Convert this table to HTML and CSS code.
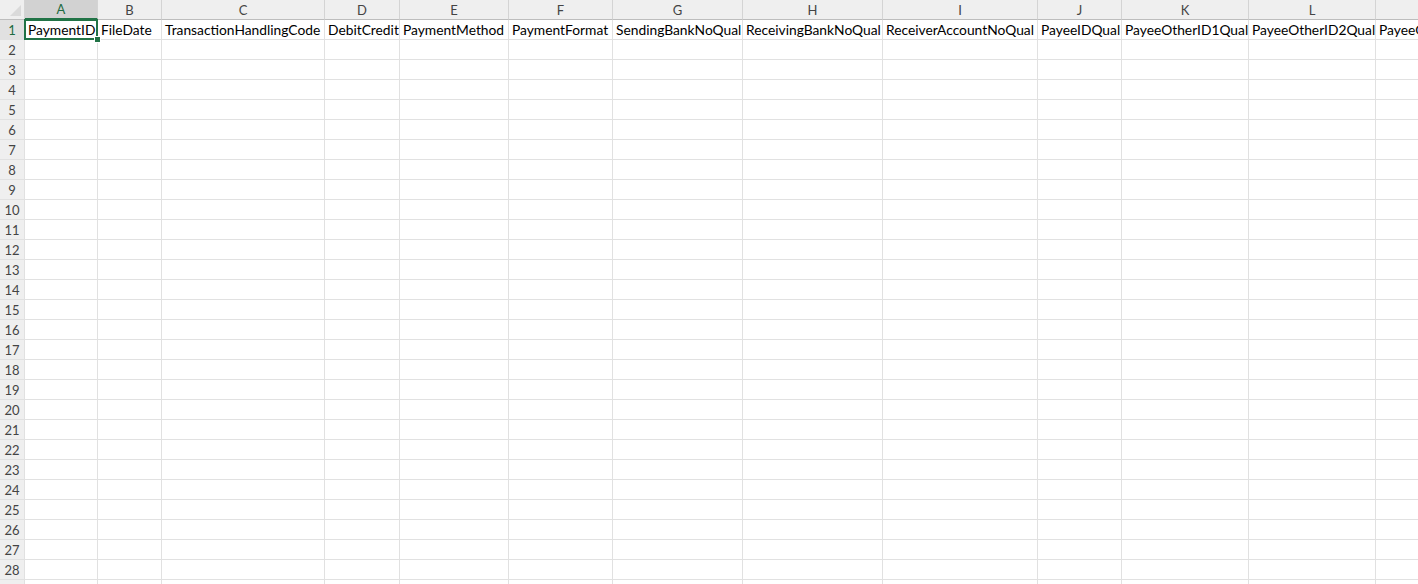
FILE: index.html
```html
<!DOCTYPE html>
<html>
<head>
<meta charset="utf-8">
<link rel="stylesheet" href="styles.css">
</head>
<body>
<div class="sheet">
<table class="grid">
<colgroup>
<col class="c-rh"><col class="c-a"><col class="c-b"><col class="c-c"><col class="c-d"><col class="c-e"><col class="c-f"><col class="c-g"><col class="c-h"><col class="c-i"><col class="c-j"><col class="c-k"><col class="c-l"><col class="c-m">
</colgroup>
<thead>
<tr class="colhead">
<th class="corner"><span class="tri"></span></th>
<th class="sel">A</th><th>B</th><th>C</th><th>D</th><th>E</th><th>F</th><th>G</th><th>H</th><th>I</th><th>J</th><th>K</th><th>L</th><th>M</th>
</tr>
</thead>
<tbody>
<tr><th class="rsel">1</th><td class="active"><span class="txt">PaymentID</span><span class="box"></span><span class="handle"></span></td><td>FileDate</td><td>TransactionHandlingCode</td><td>DebitCredit</td><td>PaymentMethod</td><td>PaymentFormat</td><td>SendingBankNoQual</td><td>ReceivingBankNoQual</td><td>ReceiverAccountNoQual</td><td>PayeeIDQual</td><td>PayeeOtherID1Qual</td><td>PayeeOtherID2Qual</td><td>PayeeOtherID3Qual</td></tr>
<tr><th>2</th><td></td><td></td><td></td><td></td><td></td><td></td><td></td><td></td><td></td><td></td><td></td><td></td><td></td></tr>
<tr><th>3</th><td></td><td></td><td></td><td></td><td></td><td></td><td></td><td></td><td></td><td></td><td></td><td></td><td></td></tr>
<tr><th>4</th><td></td><td></td><td></td><td></td><td></td><td></td><td></td><td></td><td></td><td></td><td></td><td></td><td></td></tr>
<tr><th>5</th><td></td><td></td><td></td><td></td><td></td><td></td><td></td><td></td><td></td><td></td><td></td><td></td><td></td></tr>
<tr><th>6</th><td></td><td></td><td></td><td></td><td></td><td></td><td></td><td></td><td></td><td></td><td></td><td></td><td></td></tr>
<tr><th>7</th><td></td><td></td><td></td><td></td><td></td><td></td><td></td><td></td><td></td><td></td><td></td><td></td><td></td></tr>
<tr><th>8</th><td></td><td></td><td></td><td></td><td></td><td></td><td></td><td></td><td></td><td></td><td></td><td></td><td></td></tr>
<tr><th>9</th><td></td><td></td><td></td><td></td><td></td><td></td><td></td><td></td><td></td><td></td><td></td><td></td><td></td></tr>
<tr><th>10</th><td></td><td></td><td></td><td></td><td></td><td></td><td></td><td></td><td></td><td></td><td></td><td></td><td></td></tr>
<tr><th>11</th><td></td><td></td><td></td><td></td><td></td><td></td><td></td><td></td><td></td><td></td><td></td><td></td><td></td></tr>
<tr><th>12</th><td></td><td></td><td></td><td></td><td></td><td></td><td></td><td></td><td></td><td></td><td></td><td></td><td></td></tr>
<tr><th>13</th><td></td><td></td><td></td><td></td><td></td><td></td><td></td><td></td><td></td><td></td><td></td><td></td><td></td></tr>
<tr><th>14</th><td></td><td></td><td></td><td></td><td></td><td></td><td></td><td></td><td></td><td></td><td></td><td></td><td></td></tr>
<tr><th>15</th><td></td><td></td><td></td><td></td><td></td><td></td><td></td><td></td><td></td><td></td><td></td><td></td><td></td></tr>
<tr><th>16</th><td></td><td></td><td></td><td></td><td></td><td></td><td></td><td></td><td></td><td></td><td></td><td></td><td></td></tr>
<tr><th>17</th><td></td><td></td><td></td><td></td><td></td><td></td><td></td><td></td><td></td><td></td><td></td><td></td><td></td></tr>
<tr><th>18</th><td></td><td></td><td></td><td></td><td></td><td></td><td></td><td></td><td></td><td></td><td></td><td></td><td></td></tr>
<tr><th>19</th><td></td><td></td><td></td><td></td><td></td><td></td><td></td><td></td><td></td><td></td><td></td><td></td><td></td></tr>
<tr><th>20</th><td></td><td></td><td></td><td></td><td></td><td></td><td></td><td></td><td></td><td></td><td></td><td></td><td></td></tr>
<tr><th>21</th><td></td><td></td><td></td><td></td><td></td><td></td><td></td><td></td><td></td><td></td><td></td><td></td><td></td></tr>
<tr><th>22</th><td></td><td></td><td></td><td></td><td></td><td></td><td></td><td></td><td></td><td></td><td></td><td></td><td></td></tr>
<tr><th>23</th><td></td><td></td><td></td><td></td><td></td><td></td><td></td><td></td><td></td><td></td><td></td><td></td><td></td></tr>
<tr><th>24</th><td></td><td></td><td></td><td></td><td></td><td></td><td></td><td></td><td></td><td></td><td></td><td></td><td></td></tr>
<tr><th>25</th><td></td><td></td><td></td><td></td><td></td><td></td><td></td><td></td><td></td><td></td><td></td><td></td><td></td></tr>
<tr><th>26</th><td></td><td></td><td></td><td></td><td></td><td></td><td></td><td></td><td></td><td></td><td></td><td></td><td></td></tr>
<tr><th>27</th><td></td><td></td><td></td><td></td><td></td><td></td><td></td><td></td><td></td><td></td><td></td><td></td><td></td></tr>
<tr><th>28</th><td></td><td></td><td></td><td></td><td></td><td></td><td></td><td></td><td></td><td></td><td></td><td></td><td></td></tr>
<tr><th></th><td></td><td></td><td></td><td></td><td></td><td></td><td></td><td></td><td></td><td></td><td></td><td></td><td></td></tr>
</tbody>
</table>
</div>
</body>
</html>
```
FILE: styles.css
```css
html, body {
  margin: 0;
  padding: 0;
  background: #ffffff;
}
.sheet {
  width: 1418px;
  height: 584px;
  overflow: hidden;
}
.grid {
  border-collapse: separate;
  border-spacing: 0;
  table-layout: fixed;
  width: 1503px;
  font-family: Lato, "Open Sans", sans-serif;
  font-size: 13.8px;
  color: #000;
}
.c-rh { width: 25px; }
.c-a { width: 73px; }
.c-b { width: 64px; }
.c-c { width: 163px; }
.c-d { width: 75px; }
.c-e { width: 109px; }
.c-f { width: 104px; }
.c-g { width: 130px; }
.c-h { width: 140px; }
.c-i { width: 155px; }
.c-j { width: 84px; }
.c-k { width: 127px; }
.c-l { width: 127px; }
.c-m { width: 127px; }

.grid th, .grid td {
  box-sizing: border-box;
  padding: 0;
  border-right: 1px solid #e1e1e1;
  border-bottom: 1px solid #e1e1e1;
  white-space: nowrap;
}
.grid td {
  height: 20px;
  padding: 0 0 0 3px;
  text-align: left;
  line-height: 19px;
  vertical-align: middle;
  overflow: hidden;
}
.colhead th {
  height: 19px;
  background: #efefef;
  border-right: 1px solid #d4d4d4;
  border-bottom: 1px solid #bdbdbd;
  font-weight: normal;
  font-size: 13px;
  color: #444;
  text-align: center;
  line-height: 18px;
}
.colhead th.sel {
  background: #d2d2d2;
  color: #1e6b41;
  border-bottom: 2px solid #217346;
}
.corner {
  position: relative;
}
.tri {
  position: absolute;
  right: 3px;
  bottom: 3px;
  width: 0;
  height: 0;
  border-left: 11px solid transparent;
  border-bottom: 11px solid #dadada;
}
tbody th {
  height: 20px;
  background: #efefef;
  border-right: 1px solid #bdbdbd;
  border-bottom: 1px solid #d4d4d4;
  font-weight: normal;
  font-size: 13px;
  color: #444;
  text-align: center;
  padding: 0;
}
tbody th.rsel {
  background: #e1e1e1;
  color: #1e6b41;
}
.grid td.active {
  position: relative;
  overflow: visible;
}
.box {
  position: absolute;
  left: -1px;
  top: -1px;
  right: -1px;
  bottom: -1px;
  border: 2px solid #217346;
  pointer-events: none;
}
.handle {
  position: absolute;
  right: -4px;
  bottom: -4px;
  width: 5px;
  height: 5px;
  background: #217346;
  border: 1px solid #fff;
}
```
